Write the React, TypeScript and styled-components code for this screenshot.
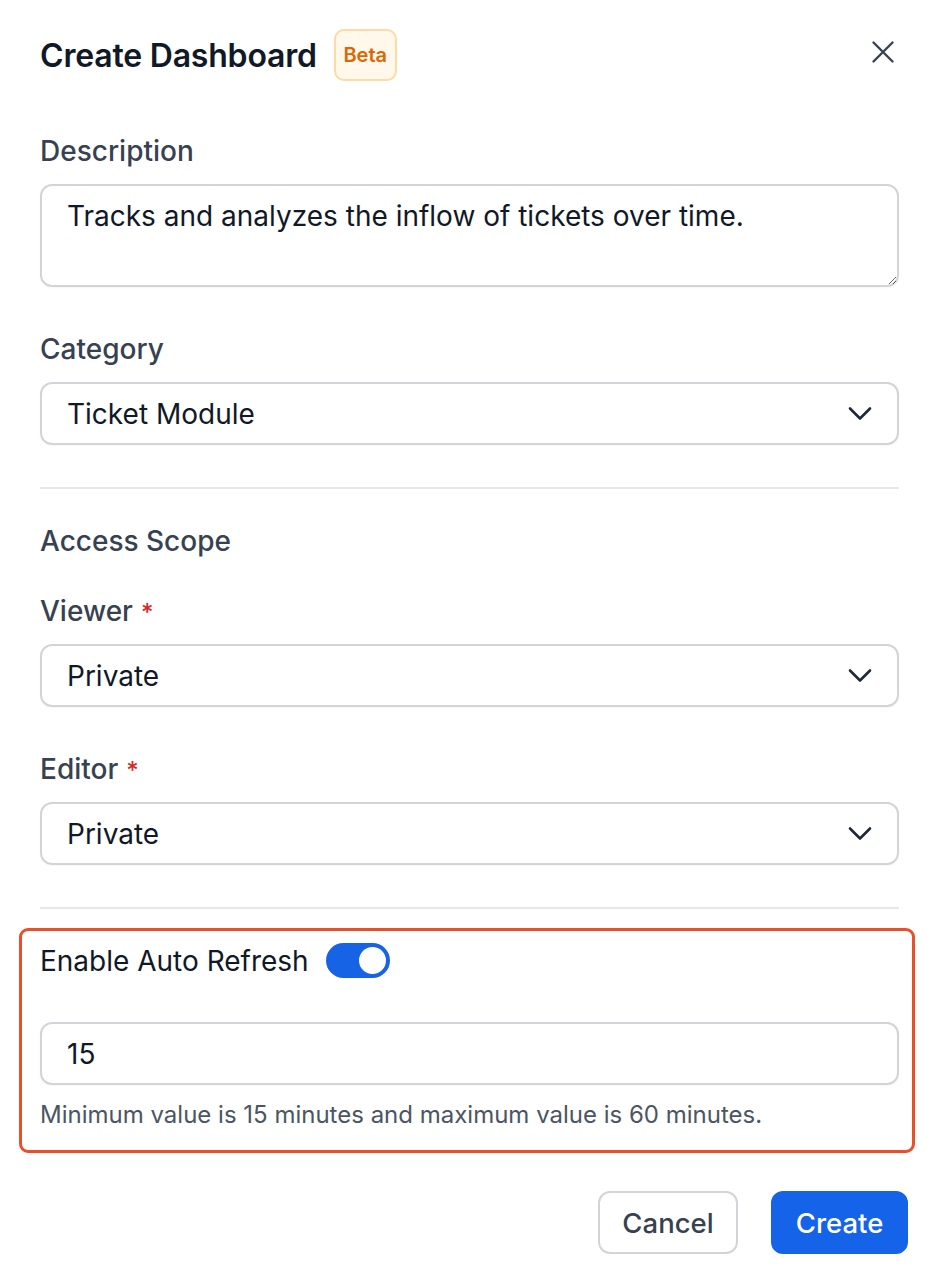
import React, { useState } from 'react';
import styled, { createGlobalStyle } from 'styled-components';

const GlobalStyle = createGlobalStyle`
  html, body {
    margin: 0;
    padding: 0;
    background: #ffffff;
  }
  body {
    font-family: Inter, "Noto Sans", "Liberation Sans", sans-serif;
    color: #111827;
    -webkit-font-smoothing: antialiased;
  }
  * {
    box-sizing: border-box;
  }
`;

const Dialog = styled.div`
  width: 936px;
  min-height: 1282px;
  padding: 29px 37px 0 40px;
  display: flex;
  flex-direction: column;
`;

const Header = styled.div`
  display: flex;
  align-items: center;
  height: 52px;
`;

const Title = styled.h2`
  margin: 0;
  font-size: 32px;
  font-weight: 600;
  letter-spacing: -0.2px;
  color: #111827;
`;

const Badge = styled.span`
  margin-left: 17px;
  width: 63px;
  height: 52px;
  display: inline-flex;
  align-items: center;
  justify-content: center;
  border: 2px solid #fcdca3;
  background: #fff8eb;
  border-radius: 10px;
  color: #dc6803;
  font-size: 20px;
  font-weight: 600;
`;

const CloseButton = styled.button`
  margin-left: auto;
  margin-top: -6px;
  margin-right: 4px;
  width: 24px;
  height: 24px;
  padding: 0;
  border: none;
  background: transparent;
  display: flex;
  align-items: center;
  justify-content: center;
  cursor: pointer;
`;

const Field = styled.div<{ $top: number }>`
  display: flex;
  flex-direction: column;
  margin-top: ${(p) => p.$top}px;
`;

const Label = styled.label`
  display: block;
  height: 32px;
  font-size: 28px;
  line-height: 32px;
  font-weight: 500;
  color: #374151;
  margin-bottom: 17px;
`;

const Required = styled.span`
  color: #dc2626;
  margin-left: 8px;
  font-size: 24px;
  line-height: 1;
`;

const SectionTitle = styled.div<{ $top: number }>`
  margin-top: ${(p) => p.$top}px;
  font-size: 28px;
  line-height: 32px;
  font-weight: 500;
  color: #374151;
`;

const TextArea = styled.textarea`
  width: 100%;
  height: 103px;
  border: 2px solid #d4d4d8;
  border-radius: 12px;
  padding: 14px 25px;
  font-family: inherit;
  font-size: 28px;
  line-height: 32px;
  color: #111827;
  resize: vertical;
  outline: none;
  box-shadow: 0 1px 2px rgba(0, 0, 0, 0.04);
`;

const SelectBox = styled.div`
  height: 63px;
  border: 2px solid #d4d4d8;
  border-radius: 12px;
  padding: 0 25px;
  display: flex;
  align-items: center;
  justify-content: space-between;
  font-size: 28px;
  color: #111827;
  box-shadow: 0 1px 2px rgba(0, 0, 0, 0.04);
  cursor: pointer;
`;

const TextInput = styled.input`
  width: 100%;
  height: 63px;
  border: 2px solid #d4d4d8;
  border-radius: 12px;
  padding: 0 25px;
  font-family: inherit;
  font-size: 28px;
  color: #111827;
  outline: none;
  box-shadow: 0 1px 2px rgba(0, 0, 0, 0.04);
`;

const Divider = styled.hr<{ $top: number }>`
  margin: ${(p) => p.$top}px 0 0;
  border: none;
  height: 2px;
  background: #e5e7eb;
`;

const Highlight = styled.section`
  margin: 19px -16px 0 -21px;
  border: 3px solid #e8502a;
  border-radius: 9px;
  padding: 12px 13px 21px 18px;
  display: flex;
  flex-direction: column;
`;

const ToggleRow = styled.div`
  display: flex;
  align-items: center;
  gap: 17px;
  height: 35px;
  font-size: 28px;
  color: #111827;
`;

const Switch = styled.button<{ $on: boolean }>`
  position: relative;
  width: 64px;
  height: 35px;
  border-radius: 18px;
  border: none;
  padding: 0;
  background: ${(p) => (p.$on ? '#1763e5' : '#d1d5db')};
  cursor: pointer;
`;

const Knob = styled.span<{ $on: boolean }>`
  position: absolute;
  top: 4px;
  left: ${(p) => (p.$on ? '33px' : '4px')};
  width: 27px;
  height: 27px;
  border-radius: 50%;
  background: #ffffff;
  transition: left 0.15s;
`;

const InputWrap = styled.div`
  margin-top: 44px;
`;

const Hint = styled.p`
  margin: 16px 0 0;
  font-size: 24px;
  line-height: 28px;
  color: #4b5563;
`;

const Footer = styled.div`
  display: flex;
  justify-content: flex-end;
  gap: 33px;
  margin: 38px -9px 0 0;
`;

const Button = styled.button<{ $primary?: boolean }>`
  height: 63px;
  width: ${(p) => (p.$primary ? '137px' : '140px')};
  padding: 0;
  border-radius: 12px;
  font-family: inherit;
  font-size: 27.5px;
  font-weight: 500;
  cursor: pointer;
  border: 2px solid ${(p) => (p.$primary ? '#1563e9' : '#d4d4d8')};
  background: ${(p) => (p.$primary ? '#1563e9' : '#ffffff')};
  color: ${(p) => (p.$primary ? '#ffffff' : '#374151')};
`;

const Chevron = () => (
  <svg width="24" height="24" viewBox="0 0 24 24" fill="none">
    <path d="M2 6.5l10 10 10-10" stroke="#1f2937" strokeWidth="2.6" strokeLinecap="round" strokeLinejoin="round" />
  </svg>
);

const CloseIcon = () => (
  <svg width="24" height="24" viewBox="0 0 24 24" fill="none">
    <path d="M2.5 2.5l19 19M21.5 2.5l-19 19" stroke="#374151" strokeWidth="2.4" strokeLinecap="round" />
  </svg>
);

const Select = ({ value }: { value: string }) => (
  <SelectBox>
    <span>{value}</span>
    <Chevron />
  </SelectBox>
);

export default function App() {
  const [autoRefresh, setAutoRefresh] = useState(true);
  const [minutes, setMinutes] = useState('15');

  return (
    <>
      <GlobalStyle />
      <Dialog>
        <Header>
          <Title>Create Dashboard</Title>
          <Badge>Beta</Badge>
          <CloseButton aria-label="Close">
            <CloseIcon />
          </CloseButton>
        </Header>

        <Field $top={54}>
          <Label>Description</Label>
          <TextArea defaultValue="Tracks and analyzes the inflow of tickets over time." />
        </Field>

        <Field $top={46}>
          <Label>Category</Label>
          <Select value="Ticket Module" />
        </Field>

        <Divider $top={42} />

        <SectionTitle $top={36}>Access Scope</SectionTitle>

        <Field $top={38}>
          <Label>
            Viewer<Required>*</Required>
          </Label>
          <Select value="Private" />
        </Field>

        <Field $top={46}>
          <Label>
            Editor<Required>*</Required>
          </Label>
          <Select value="Private" />
        </Field>

        <Divider $top={42} />

        <Highlight>
          <ToggleRow>
            Enable Auto Refresh
            <Switch $on={autoRefresh} onClick={() => setAutoRefresh(!autoRefresh)} aria-label="Enable Auto Refresh">
              <Knob $on={autoRefresh} />
            </Switch>
          </ToggleRow>
          <InputWrap>
            <TextInput value={minutes} onChange={(e) => setMinutes(e.target.value)} />
          </InputWrap>
          <Hint>Minimum value is 15 minutes and maximum value is 60 minutes.</Hint>
        </Highlight>

        <Footer>
          <Button>Cancel</Button>
          <Button $primary>Create</Button>
        </Footer>
      </Dialog>
    </>
  );
}
